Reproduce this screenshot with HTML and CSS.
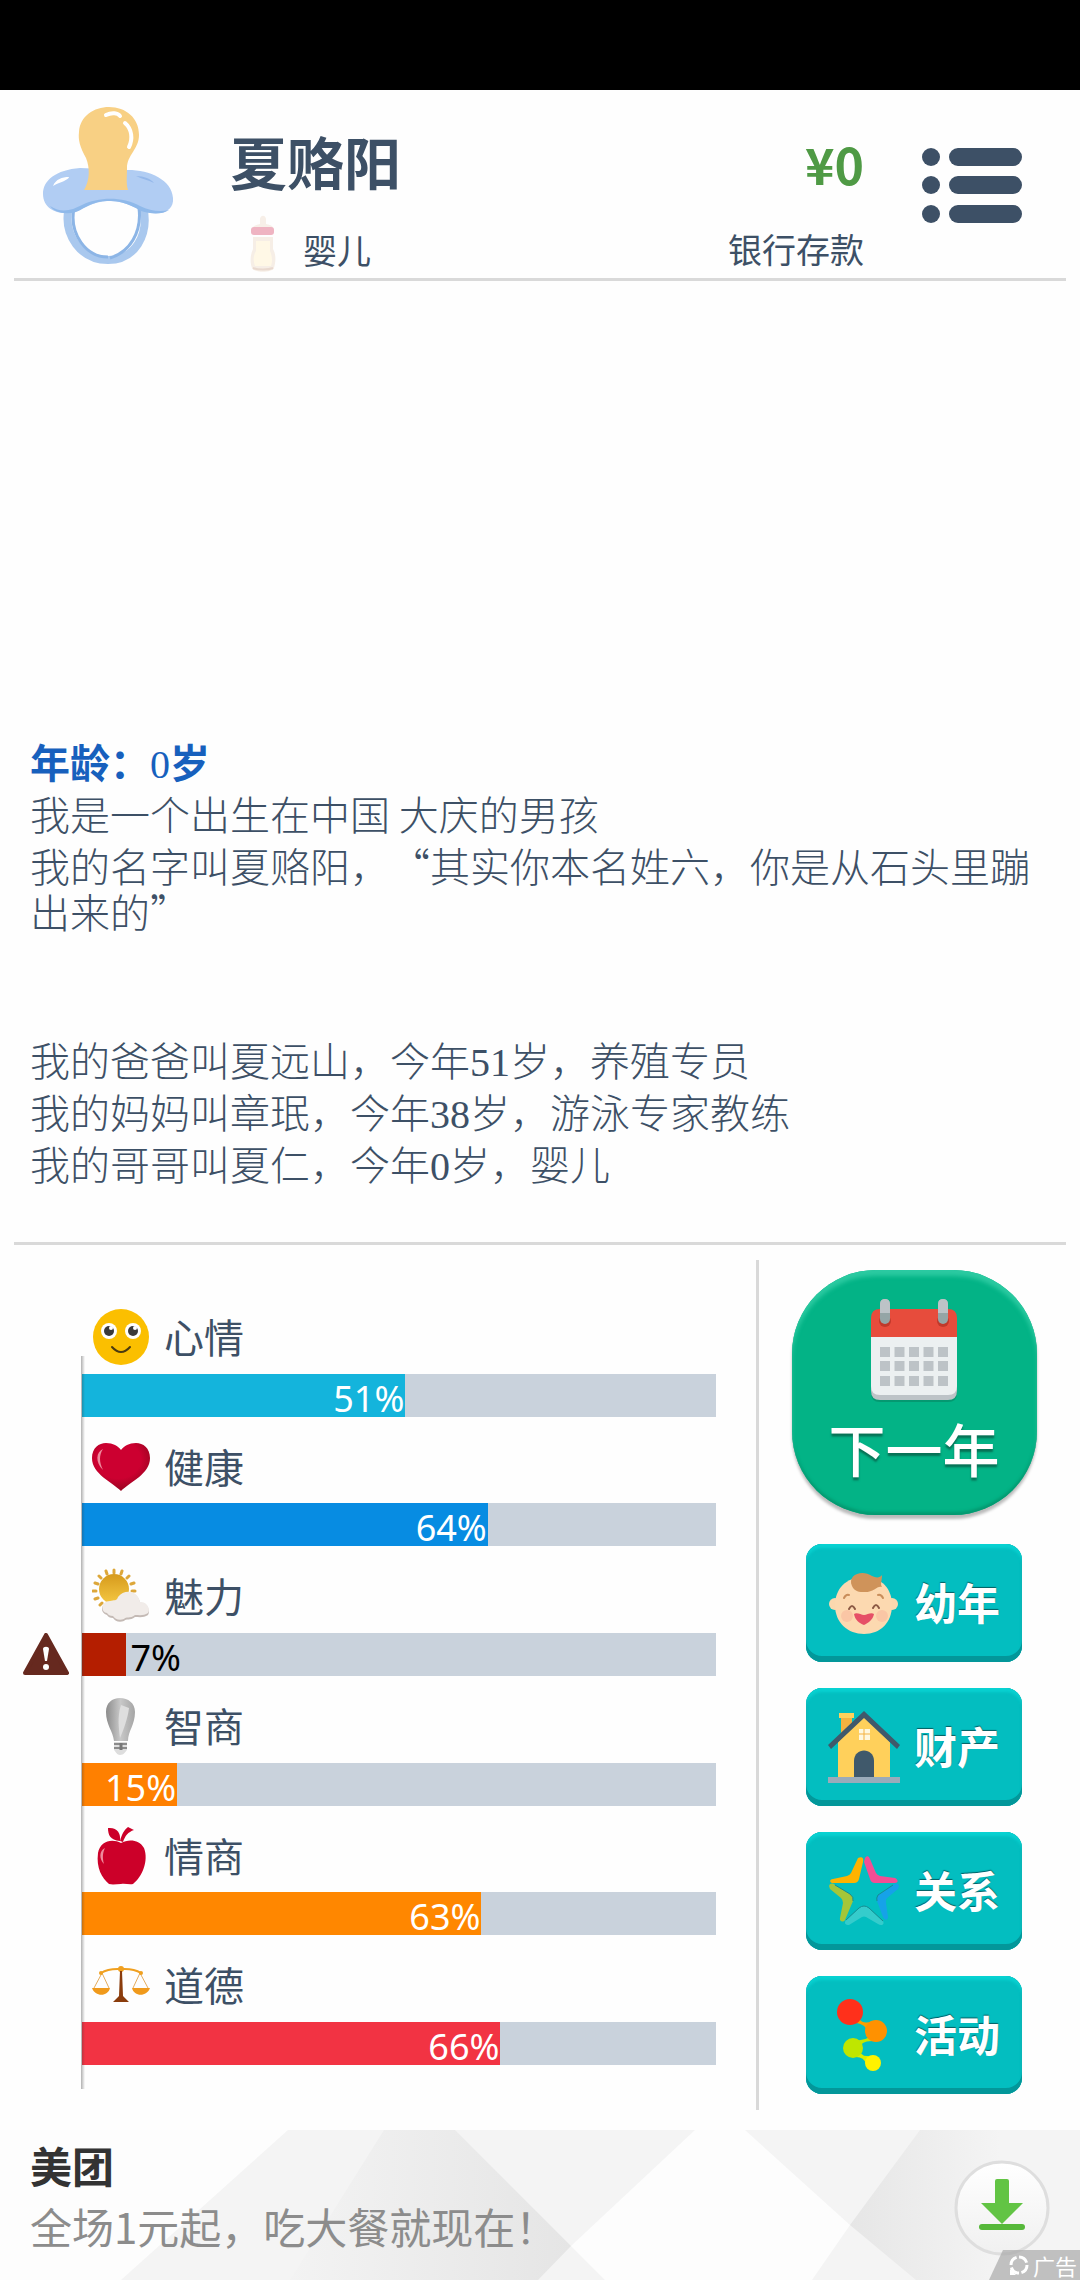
FILE: index.html
```html
<!DOCTYPE html>
<html lang="zh-CN">
<head>
    <meta charset="UTF-8">
    <meta name="viewport" content="width=device-width, initial-scale=1.0">
    <title>夏赂阳</title>
    <link rel="stylesheet" href="styles.css">
</head>
<body>
    <div class="status-bar"></div>

    <!-- Player header -->
    <header class="header">
        <svg class="avatar" viewBox="0 0 132 158" aria-hidden="true">
            <path d="M27 100C20 130 40 154 66 154S108 130 101 100" fill="none" stroke="#a9c8ee" stroke-width="8"/>
            <path d="M32 102C27 128 44 151 66 151" fill="none" stroke="#8cb5e6" stroke-width="3"/>
            <path d="M97 102C100 126 88 146 68 152" fill="none" stroke="#8cb5e6" stroke-width="3"/>
            <path d="M38 62C14 64 1 74 1 88C1 102 14 108 26 107C42 105 48 95 68 95C86 95 96 105 110 107C124 109 132 102 131 92C130 74 108 64 86 64Z" fill="#b1cdf3"/>
            <path d="M8 100C20 108 30 104 40 99C56 91 80 90 98 100C108 105 118 106 127 104C120 109 108 108 99 105C84 96 76 95 66 95C50 95 44 102 34 106C22 109 12 106 8 100Z" fill="#8fb9ea"/>
            <path d="M11 80C14 73 20 71 27 71C27 74 18 76 11 80Z" fill="#fff"/>
            <path d="M94 70C102 70 109 73 112 77C106 74 100 73 94 70Z" fill="#94b8ea"/>
            <path d="M42 84C48 74 48 62 44 52C38 41 36 34 37 26C38 10 52 1 67 1C84 1 97 12 97 29C97 43 85 49 85 62C85 71 84 77 86 84Z" fill="#f8d084"/>
            <path d="M64 9C70 6 76 7 78 10M83 17C90 23 91 33 87 41" fill="none" stroke="#fff" stroke-width="4" stroke-linecap="round"/>
        </svg>
        <div class="player">
            <h1 class="player-name">夏赂阳</h1>
            <div class="player-stage">
                <svg class="bottle" viewBox="0 0 26 60" aria-hidden="true">
                    <path d="M10 8C9 1 17 1 16 8V11C22 12 24 14 24 18H2C2 14 4 12 10 11Z" fill="#f7efe8"/>
                    <path d="M3 24H23V36C27 43 25 51 24 55C22 60 4 60 2 55C0 50 0 42 3 36Z" fill="#f6eee6"/>
                    <path d="M6 28H20V38C23 45 22 50 21 53H5C3 48 3 43 6 38Z" fill="#fff8e6"/>
                    <rect x="1" y="14" width="23" height="8" rx="3" fill="#efb4c2"/>
                    <path d="M3 55C8 57 18 57 23 55" stroke="#e9d9cf" stroke-width="2" fill="none"/>
                </svg>
                <span>婴儿</span>
            </div>
        </div>
        <div class="bank">
            <div class="bank-amount">¥0</div>
            <div class="bank-label">银行存款</div>
        </div>
        <button class="menu-button" type="button" aria-label="菜单">
            <svg viewBox="0 0 100 75" aria-hidden="true">
                <g fill="#3d5066">
                    <circle cx="9" cy="9" r="9"/>
                    <circle cx="9" cy="37" r="9"/>
                    <circle cx="9" cy="66" r="9"/>
                    <rect x="27" y="0" width="73" height="18" rx="9"/>
                    <rect x="27" y="28" width="73" height="18" rx="9"/>
                    <rect x="27" y="57" width="73" height="18" rx="9"/>
                </g>
            </svg>
        </button>
    </header>

    <!-- Life log -->
    <main class="log">
        <h2 class="log-age">年龄：<span class="num">0</span>岁</h2>
        <p>我是一个出生在中国 大庆的男孩</p>
        <p>我的名字叫夏赂阳，“其实你本名姓六，你是从石头里蹦出来的”</p>
        <div class="log-family">
            <p>我的爸爸叫夏远山，今年<span class="num">51</span>岁，养殖专员</p>
            <p>我的妈妈叫章珉，今年<span class="num">38</span>岁，游泳专家教练</p>
            <p>我的哥哥叫夏仁，今年<span class="num">0</span>岁，婴儿</p>
        </div>
    </main>

    <section class="panel">
        <!-- Attributes -->
        <div class="stats">
            <div class="stat">
                <div class="stat-label">
                    <svg viewBox="0 0 58 58" aria-hidden="true">
                        <circle cx="29" cy="29" r="28" fill="#fbbf00"/>
                        <circle cx="17" cy="23" r="8" fill="#fff"/>
                        <circle cx="41" cy="23" r="8" fill="#fff"/>
                        <circle cx="17" cy="23" r="5" fill="#3b3a3a"/>
                        <circle cx="41" cy="23" r="5" fill="#3b3a3a"/>
                        <circle cx="19" cy="20" r="2" fill="#fff"/>
                        <circle cx="43" cy="20" r="2" fill="#fff"/>
                        <path d="M20 39Q29 49 38 39" fill="none" stroke="#4a3a10" stroke-width="2" stroke-linecap="round"/>
                    </svg>
                    <span>心情</span>
                </div>
                <div class="bar"><div class="fill mood" style="width: 51%">51%</div></div>
            </div>
            <div class="stat">
                <div class="stat-label">
                    <svg viewBox="0 0 58 58" aria-hidden="true">
                        <defs>
                            <radialGradient id="heart" cx="45%" cy="35%" r="65%">
                                <stop offset="0.6" stop-color="#cc0030"/>
                                <stop offset="1" stop-color="#95051f"/>
                            </radialGradient>
                        </defs>
                        <path d="M29 53C20 44 0 36 0 20C0 10 7 5 14 5C21 5 26 8 29 12C32 8 37 5 44 5C51 5 58 10 58 20C58 36 38 44 29 53Z" fill="url(#heart)"/>
                        <path d="M11 11C4 14 3 24 11 32C7 24 7 17 11 11Z" fill="#ee8a9d"/>
                    </svg>
                    <span>健康</span>
                </div>
                <div class="bar"><div class="fill health" style="width: 64%">64%</div></div>
            </div>
            <div class="stat">
                <div class="stat-label">
                    <svg viewBox="0 0 58 58" aria-hidden="true">
                        <defs>
                            <linearGradient id="sun" x1="0" y1="0" x2="0" y2="1">
                                <stop offset="0" stop-color="#d69a1c"/>
                                <stop offset="1" stop-color="#f5c843"/>
                            </linearGradient>
                        </defs>
                        <g stroke="#dda73a" stroke-width="3" stroke-linecap="round">
                            <path d="M22 3V6M14 4L15 7M30 4L29 7M7 9L9 11M37 9L35 11M3 16L6 17M42 16L39 17M1 24H4M43 24H40M3 32L6 31M8 38L10 36"/>
                        </g>
                        <circle cx="22" cy="22" r="15" fill="url(#sun)"/>
                        <path d="M15 48C7 46 9 35 18 35C22 34 25 35 26 31C32 23 46 24 48 36C54 35 59 43 56 48C52 51 47 50 43 50C38 54 34 51 32 54C27 56 23 54 21 51C18 51 16 50 15 48Z" fill="#c4bab5"/>
                        <path d="M15 46C8 45 9 34 18 34C22 33 25 34 26 30C32 22 46 23 48 35C54 34 59 41 56 46C52 49 47 48 43 48C38 52 34 49 32 52C27 54 23 52 21 49C18 49 16 48 15 46Z" fill="#f1ece9"/>
                    </svg>
                    <span>魅力</span>
                </div>
                <svg class="warning" viewBox="0 0 46 42" aria-hidden="true">
                    <path d="M23 2L44 40H2Z" fill="#66291f" stroke="#66291f" stroke-width="4" stroke-linejoin="round"/>
                    <path d="M20 16C20 13 26 13 26 16L24 28H22Z" fill="#fff"/>
                    <circle cx="23" cy="34" r="3" fill="#fff"/>
                </svg>
                <div class="bar"><div class="fill charm" style="width: 7%"></div><span class="bar-value">7%</span></div>
            </div>
            <div class="stat">
                <div class="stat-label">
                    <svg viewBox="0 0 58 58" aria-hidden="true">
                        <defs>
                            <linearGradient id="bulb">
                                <stop offset="0" stop-color="#8c8c8c"/>
                                <stop offset="0.5" stop-color="#c8c8c8"/>
                                <stop offset="1" stop-color="#a5a5a5"/>
                            </linearGradient>
                        </defs>
                        <path d="M22 44C21 34 14 28 14 15C14 6 20 1 28 1S43 6 43 15C43 28 36 34 36 44Z" fill="url(#bulb)"/>
                        <path d="M29 8C25 20 27 32 28 41C32 32 36 20 37 11Z" fill="#dedede"/>
                        <path d="M22 45H35V53C33 55 32 58 28 58C25 58 24 55 22 53Z" fill="#ddd"/>
                        <path d="M22 47H35M22 51H35" stroke="#8b8b8b" stroke-width="2"/>
                        <path d="M29 46V53" stroke="#777" stroke-width="3"/>
                    </svg>
                    <span>智商</span>
                </div>
                <div class="bar"><div class="fill iq" style="width: 15%">15%</div></div>
            </div>
            <div class="stat">
                <div class="stat-label">
                    <svg viewBox="0 0 58 58" aria-hidden="true">
                        <path d="M29 16C36 12 47 12 52 21C57 34 50 50 41 57C37 58 33 56 29 57C25 57 21 58 17 57C10 51 4 41 6 26C8 14 20 11 29 16Z" fill="#cc0029"/>
                        <path d="M28 14C18 13 16 8 16 1C25 0 29 6 28 14Z" fill="#cc0029"/>
                        <path d="M28 14C30 7 32 3 36 0L42 3C36 5 33 9 31 15Z" fill="#cc0029"/>
                        <path d="M13 21C7 24 7 32 12 37C10 30 11 25 13 21Z" fill="#ee8a9d"/>
                    </svg>
                    <span>情商</span>
                </div>
                <div class="bar"><div class="fill eq" style="width: 63%">63%</div></div>
            </div>
            <div class="stat">
                <div class="stat-label">
                    <svg viewBox="0 0 58 58" aria-hidden="true">
                        <path d="M10 17L2 32M10 17L17 32M48 17L41 32M48 17L56 32" fill="none" stroke="#e5ac5c" stroke-width="1"/>
                        <path d="M9 17C17 12 23 13 29 13S41 12 49 17" fill="none" stroke="#f0a020" stroke-width="2"/>
                        <circle cx="9" cy="17" r="2" fill="#f0a020"/>
                        <circle cx="49" cy="17" r="2" fill="#f0a020"/>
                        <circle cx="29" cy="13" r="3" fill="#f0a020"/>
                        <path d="M0 32H18C16 41 3 41 0 32ZM40 32H58C55 41 42 41 40 32Z" fill="#f09a1c"/>
                        <path d="M28 15H30L31 40L37 46H21L27 40Z" fill="#8a3c0c"/>
                    </svg>
                    <span>道德</span>
                </div>
                <div class="bar"><div class="fill moral" style="width: 66%">66%</div></div>
            </div>
        </div>

        <!-- Actions -->
        <nav class="actions">
            <button class="next-button" type="button">
                <svg viewBox="0 0 88 104" aria-hidden="true">
                    <path d="M1 40H87V94Q87 103 78 103H10Q1 103 1 94Z" fill="#087e5c" opacity="0.5"/>
                    <path d="M1 38H87V92Q87 101 78 101H10Q1 101 1 92Z" fill="#bdc3c7"/>
                    <path d="M1 38H87V87Q87 96 78 96H10Q1 96 1 87Z" fill="#ecf0f1"/>
                    <path d="M1 38V19Q1 10 10 10H78Q87 10 87 19V38Z" fill="#e74c3c"/>
                    <circle cx="15" cy="22" r="6" fill="#c0392b"/>
                    <circle cx="73" cy="22" r="6" fill="#c0392b"/>
                    <rect x="10" y="0" width="10" height="25" rx="5" fill="#95a5a6"/>
                    <rect x="68" y="0" width="10" height="25" rx="5" fill="#95a5a6"/>
                    <path d="M10 14V5Q10 0 15 0T20 5V14ZM68 14V5Q68 0 73 0T78 5V14Z" fill="#bdc3c7"/>
                    <path d="M10 53H78M10 67H78M10 82H78" stroke="#bdc3c7" stroke-width="10" stroke-dasharray="10 4.5"/>
                </svg>
                <span>下一年</span>
            </button>
            <button class="action-button" type="button">
                <svg viewBox="0 0 72 72" aria-hidden="true">
                    <circle cx="7" cy="37" r="6" fill="#fbd8ae"/>
                    <circle cx="64" cy="37" r="6" fill="#fbd8ae"/>
                    <path d="M36 10C54 10 64 22 64 38C64 56 52 67 36 67S7 56 7 38C7 22 18 10 36 10Z" fill="#fcd9b0"/>
                    <path d="M24 19C19 8 34 2 44 9C48 11 52 11 54 8C54 14 52 17 54 20C49 18 46 26 35 25C29 25 26 23 24 19Z" fill="#cf935a"/>
                    <path d="M16 31Q18 27 21 28M50 28Q53 27 55 31" fill="none" stroke="#c98e5b" stroke-width="2" stroke-linecap="round"/>
                    <path d="M21 42Q24 36 27 42M45 41Q48 35 51 41" fill="none" stroke="#8c5a44" stroke-width="2" stroke-linecap="round"/>
                    <circle cx="19" cy="49" r="6" fill="#fac6a5"/>
                    <circle cx="54" cy="49" r="6" fill="#fac6a5"/>
                    <path d="M26 47C29 45 33 48 36 48S43 45 46 47C45 53 40 56 36 58C31 56 27 53 26 47Z" fill="#e64f66"/>
                </svg>
                <span>幼年</span>
            </button>
            <button class="action-button" type="button">
                <svg viewBox="0 0 72 72" aria-hidden="true">
                    <path d="M13 5H24V20L13 30Z" fill="#f4b240"/>
                    <rect x="11" y="2" width="15" height="5" fill="#ffd15c"/>
                    <path d="M36 4L62 31V66H10V31Z" fill="#ffd05b"/>
                    <path d="M36 0L72 34L69 38L36 7L3 38L0 34Z" fill="#40596b"/>
                    <rect x="0" y="66" width="72" height="6" fill="#9babba"/>
                    <path d="M26 66V50C26 36 46 36 46 50V66Z" fill="#40596b"/>
                    <rect x="31" y="18" width="11" height="11" fill="#fff8de"/>
                    <path d="M36 18V29M31 23H42" stroke="#f4b240" stroke-width="1"/>
                </svg>
                <span>财产</span>
            </button>
            <button class="action-button" type="button">
                <svg viewBox="0 0 72 72" aria-hidden="true">
                    <path d="M30 3C34 1 36 3 35 7L31 24Q30 28 26 28H4C1 27 2 24 5 24L19 21Q22 20 23 18Z" fill="#ffb300"/>
                    <path d="M37 3C39 0 41 1 42 4L48 18Q49 20 52 21L67 23C71 25 70 28 67 28H47Q43 28 42 24L36 7Z" fill="#f34e94"/>
                    <path d="M1 31C2 28 5 28 7 30L22 39Q26 42 25 46L17 65C15 68 11 66 12 63L15 48Q15 45 13 43L2 34Z" fill="#a4c639"/>
                    <path d="M71 31C70 28 67 28 65 30L50 40Q48 43 49 46L55 62C57 66 60 65 60 62L58 48Q57 45 59 43L70 34Z" fill="#16a2e8"/>
                    <path d="M31 53Q36 49 41 53L55 66C57 70 53 71 50 69L38 62Q36 61 34 62L21 70C17 70 16 68 18 65Z" fill="#35cccc"/>
                    <path d="M7 30L22 39Q26 42 25 46M65 30L50 40Q48 43 49 46M18 65L31 53Q36 49 41 53L55 66" fill="none" stroke="#168c91" stroke-width="1"/>
                </svg>
                <span>关系</span>
            </button>
            <button class="action-button" type="button">
                <svg viewBox="0 0 72 72" aria-hidden="true">
                    <path d="M31 20Q36 26 44 22L39 36Q40 25 27 24Z" fill="#f9a000"/>
                    <path d="M42 38Q33 43 26 40L32 50Q32 42 44 42Z" fill="#c6e600"/>
                    <path d="M32 50Q32 58 41 57L38 65Q36 57 26 58Z" fill="#d8ee00"/>
                    <circle cx="22" cy="13" r="13" fill="#ff301b"/>
                    <circle cx="48" cy="32" r="11" fill="#ff9100"/>
                    <circle cx="25" cy="49" r="10" fill="#bfe600"/>
                    <circle cx="45" cy="64" r="8" fill="#fff200"/>
                </svg>
                <span>活动</span>
            </button>
        </nav>
    </section>

    <!-- Banner ad -->
    <footer class="ad">
        <svg class="ad-background" viewBox="0 0 1080 150" preserveAspectRatio="none" aria-hidden="true">
            <defs>
                <linearGradient id="shade-left">
                    <stop offset="0" stop-color="#f3f3f3"/>
                    <stop offset="1" stop-color="#e5e5e5"/>
                </linearGradient>
                <linearGradient id="shade-right">
                    <stop offset="0" stop-color="#e6e6e6"/>
                    <stop offset="1" stop-color="#f4f4f4"/>
                </linearGradient>
            </defs>
            <rect width="1080" height="150" fill="#f4f4f4"/>
            <path d="M0 0H288L121 150H0Z" fill="#fdfdfd"/>
            <path d="M384 0H455L571 116L538 150H290Z" fill="url(#shade-left)"/>
            <path d="M695 0H745L850 95L812 150H605L571 116Z" fill="#fdfdfd"/>
            <path d="M920 0H1000V150H916L850 95Z" fill="url(#shade-right)"/>
        </svg>
        <a class="ad-link" href="#">
            <span class="ad-copy">
                <strong class="ad-title">美团</strong>
                <span class="ad-text">全场1元起，吃大餐就现在！</span>
            </span>
            <svg class="download" viewBox="0 0 96 96" aria-hidden="true">
                <defs>
                    <linearGradient id="disc" x1="0" y1="0" x2="0" y2="1">
                        <stop offset="0" stop-color="#fff"/>
                        <stop offset="1" stop-color="#f0f0f0"/>
                    </linearGradient>
                </defs>
                <circle cx="48" cy="48" r="46" fill="url(#disc)" stroke="#dedede" stroke-width="3"/>
                <path d="M41 21Q41 19 43 19H53Q55 19 55 21V43H69L48 64L27 43H41Z" fill="#62c444"/>
                <rect x="25" y="64" width="46" height="6" rx="3" fill="#56b83a"/>
            </svg>
        </a>
        <span class="ad-badge">
            <svg viewBox="0 0 20 20" aria-hidden="true">
                <circle cx="10" cy="10" r="8" fill="none" stroke="#fff" stroke-width="3" stroke-dasharray="10 2.5"/>
                <path d="M1 14V20H7Z" fill="#fff"/>
            </svg>
            广告
        </span>
    </footer>
</body>
</html>
```
FILE: styles.css
```css
* {
    box-sizing: border-box;
}

body {
    margin: 0;
    min-height: 100vh;
    display: flex;
    flex-direction: column;
    background: #fefefe;
    color: #3d5066;
    font-family: "Noto Sans CJK SC", sans-serif;
}

h1,
h2,
p {
    margin: 0;
}

button {
    border: 0;
    padding: 0;
    font-family: inherit;
    color: #fff;
    cursor: pointer;
}

svg {
    display: block;
    flex-shrink: 0;
}

.status-bar {
    height: 90px;
    background: #000;
}

/* Header */
.header {
    display: flex;
    margin: 0 14px;
    padding: 16px 44px 5px 28px;
    border-bottom: 3px solid #d9d9d9;
}

.avatar {
    width: 132px;
    height: 158px;
}

.player {
    flex: 1;
    margin-left: 56px;
    padding-top: 26px;
}

.player-name {
    font-size: 57px;
    font-weight: 700;
    line-height: 56px;
}

.player-stage {
    display: flex;
    align-items: flex-end;
    gap: 27px;
    margin-top: 25px;
    padding-left: 20px;
    font-size: 34px;
    line-height: 46px;
}

.bottle {
    width: 26px;
    height: 60px;
}

.bank {
    padding-top: 29px;
    text-align: right;
}

.bank-amount {
    color: #4f9a45;
    font-size: 50px;
    font-weight: 700;
    line-height: 56px;
}

.bank-label {
    margin-top: 34px;
    font-size: 34px;
    line-height: 48px;
}

.menu-button {
    align-self: flex-start;
    margin: 42px 0 0 58px;
    background: none;
}

.menu-button svg {
    width: 100px;
    height: 75px;
}

/* Log */
.log {
    flex: 1;
    display: flex;
    flex-direction: column;
    justify-content: flex-end;
    gap: 6px;
    margin: 0 14px;
    padding: 0 16px 56px;
    border-bottom: 3px solid #d9d9d9;
    font-family: KaiTi, "Noto Sans CJK SC", sans-serif;
    font-size: 40px;
    font-weight: 300;
    line-height: 46px;
    text-spacing-trim: space-all;
}

.log-age {
    color: #1760bd;
    font-size: 40px;
    font-weight: 700;
}

.log-family {
    display: flex;
    flex-direction: column;
    gap: 6px;
    margin-top: 96px;
}

.num {
    font-family: "Liberation Serif", serif;
    font-weight: 400;
    line-height: 1px;
}

/* Attributes and actions */
.panel {
    display: grid;
    grid-template-columns: 1fr 324px;
    padding: 15px 0 20px;
}

.stats {
    position: relative;
    display: grid;
    grid-auto-rows: 1fr;
    padding: 27px 40px 45px 0;
}

/* Axis drawn over the left end of the bars */
.stats::after {
    content: "";
    position: absolute;
    left: 81px;
    top: 96px;
    bottom: 21px;
    width: 4px;
    background: linear-gradient(to right, rgba(60, 60, 60, 0.4), rgba(60, 60, 60, 0));
}

.stat {
    display: grid;
    grid-template-columns: 82px 1fr;
    grid-template-rows: 1fr 43px;
}

.stat-label {
    grid-column: 2;
    display: flex;
    gap: 14px;
    padding: 21px 0 0 10px;
    font-size: 40px;
    line-height: 56px;
}

.stat-label svg {
    width: 58px;
    height: 58px;
}

.warning {
    grid-row: 2;
    width: 46px;
    height: 42px;
    justify-self: end;
    margin-right: 13px;
}

.bar {
    grid-column: 2;
    display: flex;
    background: #c9d2dc;
    color: #fff;
    font-family: "Noto Sans", sans-serif;
    font-size: 36px;
    line-height: 50px;
}

.fill {
    height: 43px;
    padding-right: 1px;
    text-align: right;
}

.bar-value {
    height: 43px;
    padding-left: 4px;
    color: #000;
}

.mood {
    background: #14b4dc;
}

.health {
    background: #078ce2;
}

.charm {
    background: #b41e00;
}

.iq {
    background: #ff8000;
}

.eq {
    background: #ff8700;
}

.moral {
    background: #f23343;
}

.actions {
    display: flex;
    flex-direction: column;
    align-items: center;
    gap: 26px;
    padding: 10px 11px 16px 0;
    border-left: 3px solid #d9d9d9;
}

.next-button {
    display: flex;
    flex-direction: column;
    align-items: center;
    justify-content: center;
    gap: 14px;
    width: 245px;
    height: 245px;
    margin-bottom: 3px;
    padding-bottom: 10px;
    border-radius: 84px;
    background: #03b386;
    box-shadow: inset 0 6px 4px #2bcaa1, inset 0 -3px 3px #049970, 0 4px 3px #bbb;
    font-size: 57px;
    font-weight: 500;
    line-height: 60px;
    text-shadow: 0 3px 2px #077256;
}

.next-button svg {
    width: 88px;
    height: 104px;
}

.action-button {
    display: flex;
    align-items: center;
    justify-content: center;
    gap: 14px;
    width: 216px;
    height: 118px;
    border-radius: 16px;
    background: #03bec0;
    box-shadow: inset 0 -6px 0 #03979a, inset 0 4px 3px #08d2d2, inset 0 0 2px 1px #12a0a2;
    font-size: 43px;
    font-weight: 700;
    line-height: 48px;
    text-shadow: 0 -1px 1px #055c60;
}

.action-button span {
    padding-bottom: 4px;
}

.action-button svg {
    width: 72px;
    height: 72px;
}

/* Ad */
.ad {
    position: relative;
    height: 150px;
    overflow: hidden;
}

.ad-background {
    position: absolute;
    inset: 0;
    width: 100%;
    height: 100%;
}

.ad-link {
    position: relative;
    display: flex;
    justify-content: space-between;
    align-items: flex-start;
    padding: 4px 30px 0;
    color: #8c8c8c;
    text-decoration: none;
}

.ad-copy {
    display: flex;
    flex-direction: column;
    font-size: 42px;
    line-height: 61px;
}

.ad-title {
    color: #333;
}

.download {
    width: 96px;
    height: 96px;
    margin-top: 26px;
}

.ad-badge {
    position: absolute;
    right: 0;
    bottom: 0;
    display: flex;
    align-items: center;
    gap: 4px;
    padding: 0 3px 0 20px;
    background: rgba(170, 170, 170, 0.7);
    clip-path: polygon(14px 0, 100% 0, 100% 100%, 0 100%);
    color: #fff;
    font-size: 22px;
    line-height: 30px;
}

.ad-badge svg {
    width: 20px;
    height: 20px;
}
```
